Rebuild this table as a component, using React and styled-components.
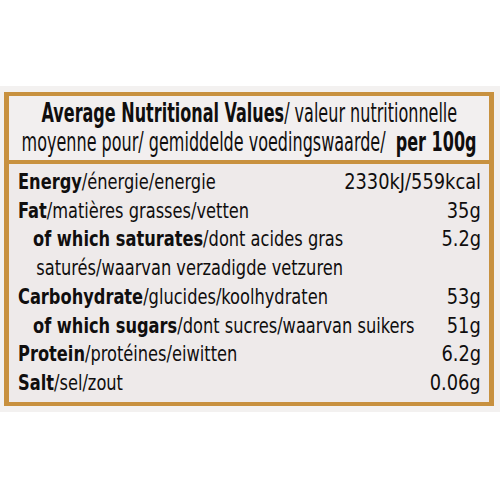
import React from "react";
import styled, { createGlobalStyle } from "styled-components";

const Global = createGlobalStyle`
  html, body { margin: 0; padding: 0; background: #ffffff; }
  body { font-family: "DejaVu Sans Condensed", "DejaVu Sans", sans-serif; color: #100e0e; }
`;

const Band = styled.div`
  margin-top: 86px;
  background: #f3f1f0;
  padding: 6px 6px 6px 4px;
`;

const Card = styled.div`
  border: 5px solid #c8913f;
  border-top-width: 4px;
  border-bottom-width: 4px;
  background: #eeeaea;
  overflow: hidden;
`;

const Header = styled.div`
  display: flex;
  flex-direction: column;
  align-items: center;
  font-size: 26px;
  line-height: 29px;
  padding: 3px 0;
  border-bottom: 4px solid #c8913f;
  background: #f2efef;
`;

const HeaderLine = styled.div`
  white-space: nowrap;
  transform: scaleX(0.685);
  transform-origin: center;
`;

const Body = styled.div`
  padding: 4px 8px 4px 9px;
  font-size: 22px;
  line-height: 28.7px;
`;

const Row = styled.div`
  display: grid;
  grid-template-columns: minmax(0, 1fr) auto;
  column-gap: 10px;
`;

const Label = styled.div`
  padding-left: ${(p) => (p.$indent ? "15px" : "0")};
  white-space: nowrap;
`;

const Squeeze = styled.span`
  display: inline-block;
  transform: scaleX(0.82);
  transform-origin: left center;
`;

const Cont = styled.span`
  display: inline-block;
  padding-left: 4px;
`;

const Value = styled.div`
  text-align: right;
  white-space: nowrap;
  transform: scaleX(0.9);
  transform-origin: right center;
`;

const rows = [
  { b: "Energy", r: "/énergie/energie", v: "2330kJ/559kcal" },
  { b: "Fat", r: "/matières grasses/vetten", v: "35g" },
  { b: "of which saturates", r: "/dont acides gras", r2: "saturés/waarvan verzadigde vetzuren", v: "5.2g", indent: true },
  { b: "Carbohydrate", r: "/glucides/koolhydraten", v: "53g" },
  { b: "of which sugars", r: "/dont sucres/waarvan suikers", v: "51g", indent: true },
  { b: "Protein", r: "/protéines/eiwitten", v: "6.2g" },
  { b: "Salt", r: "/sel/zout", v: "0.06g" },
];

export default function App() {
  return (
    <>
      <Global />
      <Band>
        <Card>
          <Header>
            <HeaderLine>
              <b>Average Nutritional Values</b>/ valeur nutritionnelle
            </HeaderLine>
            <HeaderLine>
              moyenne pour/ gemiddelde voedingswaarde/&nbsp; <b>per 100g</b>
            </HeaderLine>
          </Header>
          <Body>
            {rows.map((row) => (
              <Row key={row.b}>
                <Label $indent={row.indent}>
                  <Squeeze>
                    <b>{row.b}</b>
                    {row.r}
                    {row.r2 && (
                      <>
                        <br />
                        <Cont>{row.r2}</Cont>
                      </>
                    )}
                  </Squeeze>
                </Label>
                <Value>{row.v}</Value>
              </Row>
            ))}
          </Body>
        </Card>
      </Band>
    </>
  );
}
